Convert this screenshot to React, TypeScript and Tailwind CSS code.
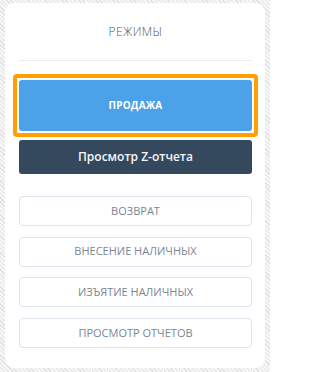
import React from "react"

const modes = ["Возврат", "Внесение наличных", "Изъятие наличных", "Просмотр отчетов"]

export default function App() {
  return (
    <div className="w-[270px] h-[372px] pt-[3px] px-[5px] bg-[repeating-linear-gradient(45deg,#e2e2e2_0px,#e2e2e2_1px,#f6f6f6_1px,#f6f6f6_3px)] font-['Open_Sans',sans-serif]">
      <div className="h-[365px] bg-white rounded-[9px] pl-[14px] pr-[13px]">
        <div className="h-[58px] flex items-center justify-center border-b border-[#ececec]">
          <span className="text-[12px] font-light tracking-[0.4px] text-[#4f5861] uppercase">Режимы</span>
        </div>

        <div className="mt-[13px] -mx-[6px] border-4 border-[#ffa000] rounded-[4px] p-[2px]">
          <button className="w-full h-[51px] rounded-[3px] bg-[#4ca2e9] text-white text-[10px] font-bold uppercase tracking-[0.2px]">
            Продажа
          </button>
        </div>

        <button className="mt-[3px] w-full h-[34px] rounded-[3px] bg-[#34495e] text-[#f4f6f8] text-[12px] font-semibold">
          Просмотр Z-отчета
        </button>

        <div className="mt-[22px] flex flex-col gap-[10.6px]">
          {modes.map((m) => (
            <button
              key={m}
              className="w-full h-[30px] rounded-[4px] border border-[#dbe2eb] bg-white text-[11px] uppercase text-[#7a8694]"
            >
              {m}
            </button>
          ))}
        </div>
      </div>
    </div>
  )
}
